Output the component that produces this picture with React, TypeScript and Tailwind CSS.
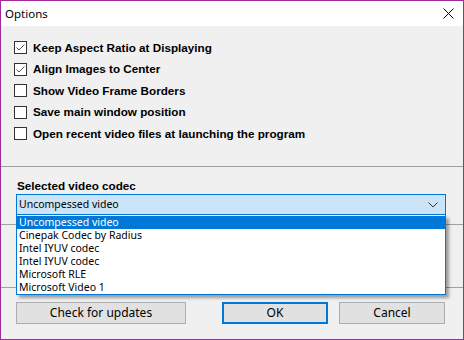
import React from "react";

const seg = { fontFamily: '"Noto Sans", "Open Sans", sans-serif' };
const ms = { fontFamily: '"Liberation Sans", Arial, sans-serif' };

function Check({ checked, label }: { checked: boolean; label: string }) {
  return (
    <div className="flex items-center h-[21.5px] pl-[13px]">
      <div className="w-[13px] h-[13px] border border-[#333333] bg-white flex items-center justify-center">
        {checked && (
          <svg width="11" height="11" viewBox="0 0 11 11">
            <polyline points="1.5,5.5 4,8 9.5,2.5" fill="none" stroke="#555" strokeWidth="1" />
          </svg>
        )}
      </div>
      <span className="ml-[6px] text-[11.7px] font-bold text-black leading-none" style={ms}>
        {label}
      </span>
    </div>
  );
}

function Btn({ label, w, def }: { label: string; w: string; def?: boolean }) {
  return (
    <div
      className={`${w} h-[22px] flex items-center justify-center bg-[#e1e1e1] text-[12px] text-black ${
        def ? "border-2 border-[#0078d7]" : "border border-[#adadad]"
      }`}
      style={seg}
    >
      {label}
    </div>
  );
}

export default function App() {
  const items = [
    "Uncompessed video",
    "Cinepak Codec by Radius",
    "Intel IYUV codec",
    "Intel IYUV codec",
    "Microsoft RLE",
    "Microsoft Video 1",
  ];
  return (
    <div className="w-[464px] h-[340px] border border-[#a02a9e] bg-[#f0f0f0] flex flex-col overflow-hidden">
      <div className="h-[25px] bg-white flex items-center justify-between pl-[4px] pr-[9px] shrink-0">
        <span className="text-[11.5px] text-black" style={seg}>
          Options
        </span>
        <svg width="11" height="11" viewBox="0 0 11 11">
          <path d="M0.5 0.5 L10.5 10.5 M10.5 0.5 L0.5 10.5" stroke="#000" strokeWidth="1" />
        </svg>
      </div>
      <div className="h-[140px] pt-[11px] shrink-0">
        <Check checked label="Keep Aspect Ratio at Displaying" />
        <Check checked label="Align Images to Center" />
        <Check checked={false} label="Show Video Frame Borders" />
        <Check checked={false} label="Save main window position" />
        <Check checked={false} label="Open recent video files at launching the program" />
      </div>
      <div className="h-px bg-[#a0a0a0] shrink-0" />
      <div className="h-[57px] shrink-0 pl-[16px] pt-[12px] relative z-10">
        <div className="text-[11.7px] font-bold text-black leading-[14px]" style={ms}>
          Selected video codec
        </div>
        <div className="relative mt-[1px] w-[430px] ml-[-1px]">
          <div className="h-[21px] border border-[#0078d7] bg-[#cce4f7] flex items-center justify-between pl-[2px] pr-[7px]">
            <span className="text-[10.5px] text-black leading-none" style={seg}>
              Uncompessed video
            </span>
            <svg width="10" height="6" viewBox="0 0 10 6">
              <polyline points="0.5,0.5 5,5 9.5,0.5" fill="none" stroke="#333" strokeWidth="1" />
            </svg>
          </div>
          <div className="absolute left-0 top-[21px] w-[430px] h-[80px] bg-white border border-t-0 border-[#0078d7] shadow-[3px_3px_3px_rgba(0,0,0,0.35)] flex flex-col pt-[1px]">
            {items.map((it, i) => (
              <div
                key={i}
                className={`h-[13px] pl-[2px] flex items-center text-[10.5px] leading-none ${
                  i === 0 ? "bg-[#0078d7] text-white" : "text-black"
                }`}
                style={seg}
              >
                {it}
              </div>
            ))}
          </div>
        </div>
      </div>
      <div className="h-px bg-[#a0a0a0] shrink-0" />
      <div className="h-[62px] shrink-0" />
      <div className="h-px bg-[#a0a0a0] shrink-0" />
      <div className="flex pl-[15px] pt-[14px]">
        <Btn label="Check for updates" w="w-[170px]" />
        <div className="ml-[36px]">
          <Btn label="OK" w="w-[106px]" def />
        </div>
        <div className="ml-[11px]">
          <Btn label="Cancel" w="w-[106px]" />
        </div>
      </div>
    </div>
  );
}
